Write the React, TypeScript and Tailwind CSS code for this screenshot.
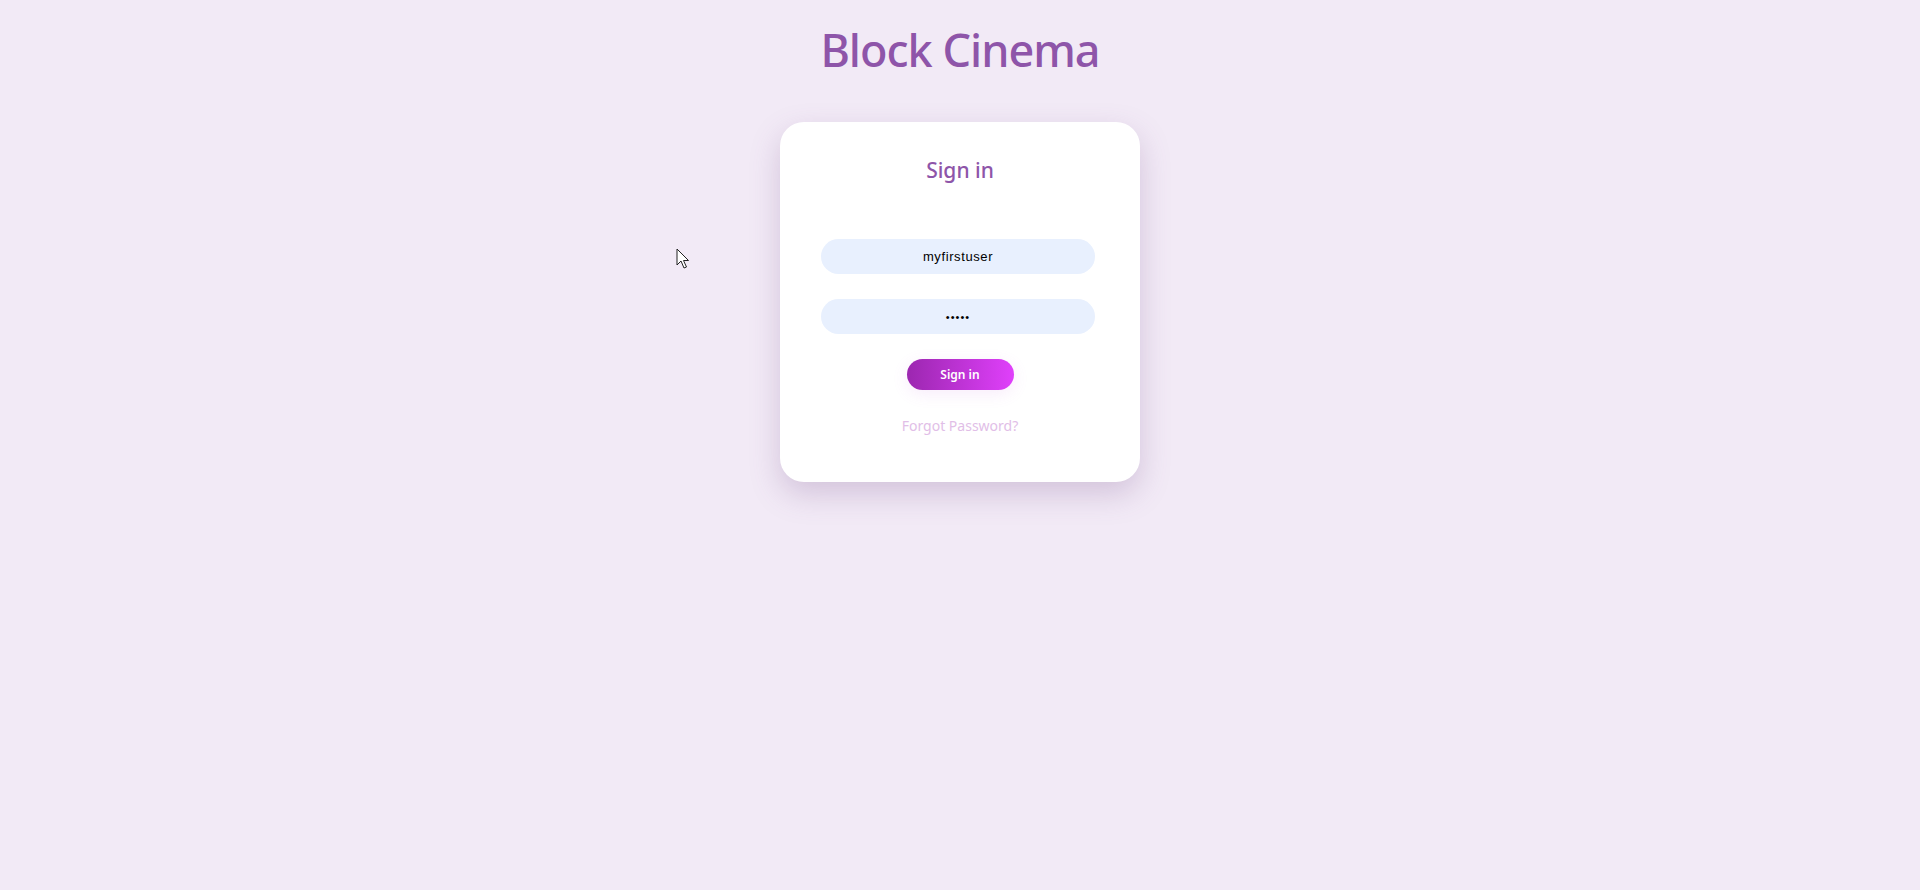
import React from 'react';

const font = { fontFamily: '"Noto Sans", "Open Sans", sans-serif' };

function Cursor() {
  return (
    <svg className="absolute left-[676px] top-[248px]" width="14" height="22" viewBox="0 0 14 22">
      <path d="M1 1 L1 17 L5 13 L8 20 L10.5 19 L7.5 12.5 L12.5 12.5 Z" fill="#fff" stroke="#222" strokeWidth="1" strokeLinejoin="round" />
    </svg>
  );
}

export default function App() {
  return (
    <div className="relative min-h-[890px] w-full bg-[#f2eaf6] flex flex-col items-center" style={font}>
      <h1 className="pt-[22px] text-[45px] leading-[56px] font-medium text-[#8e55a9] tracking-[-1px]">
        Block Cinema
      </h1>

      <div className="mt-[44px] w-[360px] h-[360px] bg-white rounded-[24px] shadow-[0_12px_30px_rgba(120,80,140,0.25)] flex flex-col items-center pt-[34px]">
        <h2 className="text-[21px] leading-[28px] font-medium text-[#8e55a9]">Sign in</h2>

        <div className="mt-[55px] -ml-[4px] flex flex-col gap-[25px] w-[274px]">
          <input
            readOnly
            value="myfirstuser"
            className="h-[35px] w-full rounded-full bg-[#e8f0fe] text-center text-[13px] tracking-[0.6px] text-black outline-none"
            style={{ fontFamily: '"Liberation Sans", Arial, sans-serif' }}
          />
          <input
            readOnly
            type="password"
            value="12345"
            className="h-[35px] w-full rounded-full bg-[#e8f0fe] text-center text-[11px] tracking-[1px] text-black outline-none"
            style={{ fontFamily: '"Liberation Sans", Arial, sans-serif' }}
          />
        </div>

        <button className="mt-[25px] w-[107px] h-[31px] rounded-full bg-gradient-to-r from-[#9c27b0] to-[#e040fb] text-white text-[12px] font-semibold shadow-[0_4px_16px_rgba(200,100,220,0.12)]">
          Sign in
        </button>

        <a className="mt-[26px] text-[14px] leading-[20px] text-[#e1bee7]">Forgot Password?</a>
      </div>

      <Cursor />
    </div>
  );
}
